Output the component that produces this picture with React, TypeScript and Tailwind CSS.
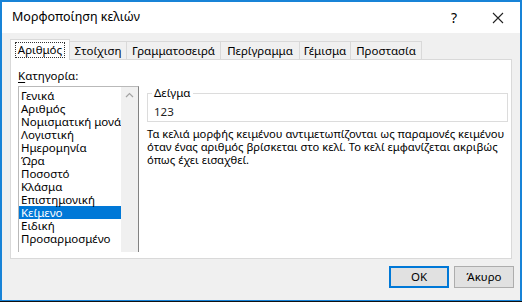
import React from "react";

const categories = [
  "Γενικά",
  "Αριθμός",
  "Νομισματική μονάδα",
  "Λογιστική",
  "Ημερομηνία",
  "Ώρα",
  "Ποσοστό",
  "Κλάσμα",
  "Επιστημονική",
  "Κείμενο",
  "Ειδική",
  "Προσαρμοσμένο",
];

const tabs = [
  { label: "Στοίχιση", w: "w-[58px]" },
  { label: "Γραμματοσειρά", w: "w-[95px]" },
  { label: "Περίγραμμα", w: "w-[80px]" },
  { label: "Γέμισμα", w: "w-[52px]" },
  { label: "Προστασία", w: "w-[72px]" },
];

const description = [
  "Τα κελιά μορφής κειμένου αντιμετωπίζονται ως παραμονές κειμένου",
  "όταν ένας αριθμός βρίσκεται στο κελί. Το κελί εμφανίζεται ακριβώς",
  "όπως έχει εισαχθεί.",
];

export default function App() {
  return (
    <div className="w-[522px] h-[302px] border-b border-[#111] font-['Noto_Sans','Open_Sans',sans-serif] text-[11.5px] text-black">
      <div className="h-full flex flex-col bg-[#f0f0f0] border-x-2 border-t-2 border-b border-[#1883d7]">
        {/* title bar */}
        <div className="h-[31px] shrink-0 bg-white flex items-center justify-between pl-[10px]">
          <span className="text-[12.5px]">Μορφοποίηση κελιών</span>
          <div className="flex items-center h-full">
            <span className="w-[44px] text-center text-[14px]">?</span>
            <span className="w-[44px] flex justify-center">
              <svg width="12" height="12" viewBox="0 0 12 12" fill="none" stroke="#222" strokeWidth="1.1">
                <path d="M1 1 L11 11 M11 1 L1 11" />
              </svg>
            </span>
          </div>
        </div>

        {/* tabs + panel */}
        <div className="px-[8px] pt-[5px]">
          <div className="flex items-end h-[21px] relative z-10">
            <div className="w-[60px] h-[21px] bg-white border border-b-0 border-[#d9d9d9] flex items-center justify-center -mb-px">
              <span className="border border-dotted border-[#333] px-[2px] leading-[14px]">Αριθμός</span>
            </div>
            {tabs.map((t) => (
              <div
                key={t.label}
                className={`${t.w} h-[18px] -ml-px first:ml-0 border border-b-0 border-[#d9d9d9] flex items-center justify-center leading-none`}
              >
                {t.label}
              </div>
            ))}
          </div>
          <div className="h-[200px] bg-white border border-[#d9d9d9] flex pl-[7px] pt-[7px] pr-[2px]">
            {/* category list */}
            <div className="w-[121px] shrink-0 flex flex-col">
              <span className="leading-[18px]">
                <span className="underline underline-offset-2">Κ</span>ατηγορία:
              </span>
              <div className="mt-[1px] h-[166px] flex border-l border-t border-[#b9b9b9] border-r border-r-[#828282]">
                <div className="flex-1 min-w-0 overflow-hidden pt-[2px]">
                  {categories.map((c) => (
                    <div
                      key={c}
                      className={`h-[13px] leading-[13px] pl-[2px] whitespace-nowrap ${
                        c === "Κείμενο" ? "bg-[#0078d7] text-white" : ""
                      }`}
                    >
                      {c}
                    </div>
                  ))}
                </div>
                <div className="w-[17px] shrink-0 bg-[#f0f0f0] flex justify-center pt-[5px]">
                  <svg width="9" height="6" viewBox="0 0 9 6" fill="none" stroke="#a3a3a3" strokeWidth="1.2">
                    <path d="M1 5 L4.5 1.5 L8 5" />
                  </svg>
                </div>
              </div>
            </div>

            {/* right side */}
            <div className="flex-1 min-w-0 ml-[8px] pt-[26px] pr-[1px]">
              <div className="relative border border-[#dcdcdc] h-[29px] pl-[6px] pt-[9px]">
                <span className="absolute -top-[9px] left-[4px] bg-white px-[2px] leading-[16px]">Δείγμα</span>
                <span className="leading-[14px] text-[#222]">123</span>
              </div>
              <div className="mt-[5px] text-[11.2px] leading-[13px] whitespace-nowrap">
                {description.map((line) => (
                  <div key={line}>{line}</div>
                ))}
              </div>
            </div>
          </div>
        </div>

        {/* footer */}
        <div className="flex justify-end gap-[5px] pr-[6px] pt-[7px]">
          <button className="w-[60px] h-[22px] bg-[#e1e1e1] border-2 border-[#0078d7] leading-none">OK</button>
          <button className="w-[60px] h-[22px] bg-[#e1e1e1] border border-[#adadad] leading-none">Άκυρο</button>
        </div>
      </div>
    </div>
  );
}
